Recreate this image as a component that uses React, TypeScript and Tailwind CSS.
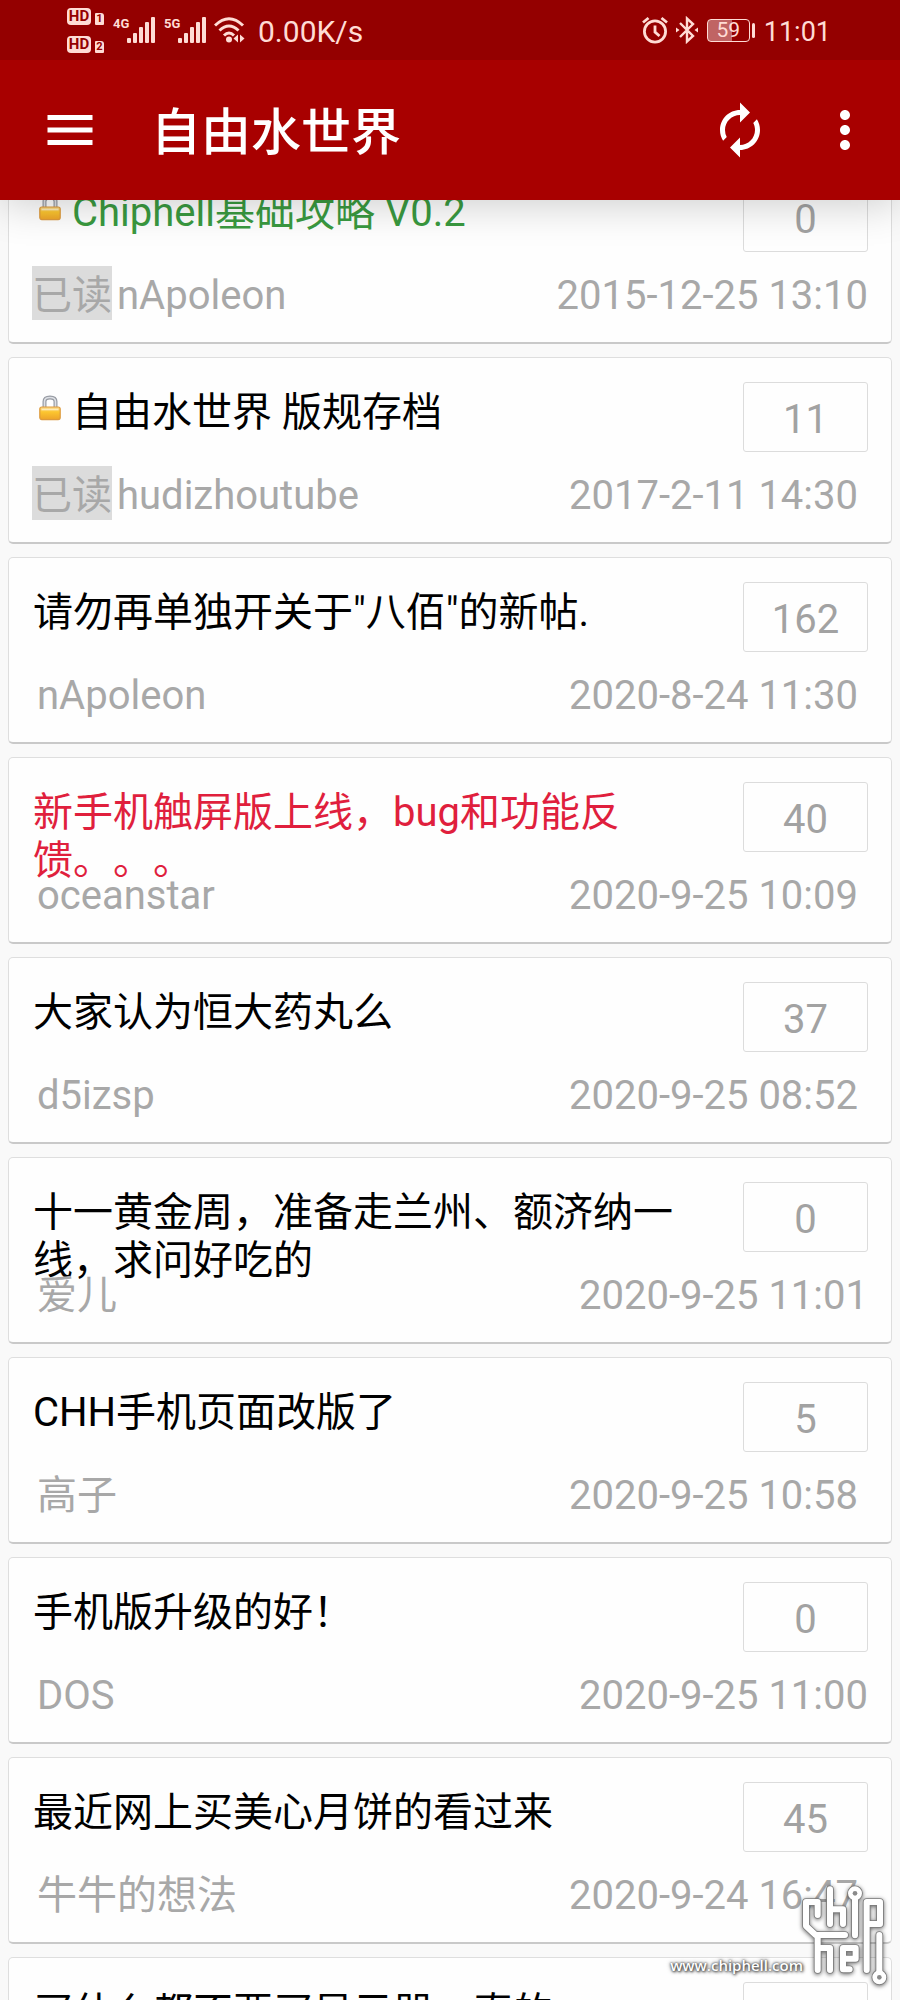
import { MdAutorenew, MdMenu, MdMoreVert } from "react-icons/md";

type Thread = {
  title: string;
  author: string;
  date: string;
  replies: number;
  read?: boolean;
  locked?: boolean;
  tone?: "green" | "red";
  flush?: boolean;
};

const threads: Thread[] = [
  { title: "Chiphell基础攻略 V0.2", author: "nApoleon", date: "2015-12-25 13:10", replies: 0, read: true, locked: true, tone: "green", flush: true },
  { title: "自由水世界 版规存档", author: "hudizhoutube", date: "2017-2-11 14:30", replies: 11, read: true, locked: true },
  { title: "请勿再单独开关于\"八佰\"的新帖.", author: "nApoleon", date: "2020-8-24 11:30", replies: 162 },
  { title: "新手机触屏版上线，bug和功能反馈。。。", author: "oceanstar", date: "2020-9-25 10:09", replies: 40, tone: "red" },
  { title: "大家认为恒大药丸么", author: "d5izsp", date: "2020-9-25 08:52", replies: 37 },
  { title: "十一黄金周，准备走兰州、额济纳一线，求问好吃的", author: "爱儿", date: "2020-9-25 11:01", replies: 0, flush: true },
  { title: "CHH手机页面改版了", author: "高子", date: "2020-9-25 10:58", replies: 5 },
  { title: "手机版升级的好！", author: "DOS", date: "2020-9-25 11:00", replies: 0, flush: true },
  { title: "最近网上买美心月饼的看过来", author: "牛牛的想法", date: "2020-9-24 16:47", replies: 45 },
  { title: "买什么都不要买显示器，真的", author: "", date: "", replies: 0 },
];

const tones = { green: "text-[#3a9a40]", red: "text-[#e01f3d]" };

function LockIcon() {
  return (
    <svg className="mr-[11px] ml-[6px] inline-block h-[26px] w-[22px] align-[5px]" viewBox="0 0 22 26" aria-hidden="true">
      <defs>
        <linearGradient id="brass" x1="0" y1="0" x2="0" y2="1">
          <stop offset="0" stopColor="#fbd98a" />
          <stop offset="0.4" stopColor="#fcc62f" />
          <stop offset="1" stopColor="#eda32a" />
        </linearGradient>
      </defs>
      <path d="M5.5 13V6.5Q5.5 2.5 11 2.5T16.5 6.5V13" fill="none" stroke="#979ba3" strokeWidth="4" />
      <path d="M5.5 13V6.5Q5.5 2.5 11 2.5T16.5 6.5V13" fill="none" stroke="#dddfe4" strokeWidth="1.6" />
      <rect x="0.8" y="12" width="20.4" height="12.6" rx="2" fill="url(#brass)" stroke="#dd9a3c" strokeWidth="1.2" />
      <path d="M2.5 14.5h17" stroke="#fdeab8" strokeWidth="1.6" />
    </svg>
  );
}

function Signal({ label }: { label: string }) {
  return (
    <div className="flex h-[26px] items-start">
      <span className="w-[14px] text-[13px] leading-[13px] font-bold">{label}</span>
      <svg className="h-[26px] w-[28px]" viewBox="0 0 28 26" fill="currentColor" aria-hidden="true">
        <rect x="0" y="21" width="4" height="5" rx="1" />
        <rect x="6" y="16" width="4" height="10" rx="1" />
        <rect x="12" y="10" width="4" height="16" rx="1" />
        <rect x="18" y="5" width="4" height="21" rx="1" />
        <rect x="24" y="0" width="4" height="26" rx="1" />
      </svg>
    </div>
  );
}

function Sim({ slot }: { slot: number }) {
  return (
    <div className="flex items-end gap-1">
      <span className="flex h-[17px] w-[24px] items-center justify-center rounded-[4px] bg-[#ffdcd5] text-[15px] leading-none font-bold text-[#940000]">
        HD
      </span>
      <span className="flex h-[12px] w-[9px] items-center justify-center rounded-[1px] rounded-tr-[3px] bg-[#ffdcd5] text-[11px] leading-none font-bold text-[#940000]">
        {slot}
      </span>
    </div>
  );
}

function StatusBar() {
  return (
    <div className="flex h-[60px] items-center justify-between bg-[#940000] pr-[69px] pl-[67px] text-[#ffdcd5]">
      <div className="flex items-center">
        <div className="flex flex-col gap-[11px] pt-px pb-px">
          <Sim slot={1} />
          <Sim slot={2} />
        </div>
        <div className="ml-[9px] flex items-center gap-[9px]">
          <Signal label="4G" />
          <Signal label="5G" />
        </div>
        <svg className="ml-2 h-[26px] w-[31px]" viewBox="0 0 31 26" fill="none" stroke="currentColor" strokeWidth="3" aria-hidden="true">
          <path d="M1 8.5Q15 -5 29 8.5" />
          <path d="M5.5 13.5Q15 4.500 24.500 13.500" />
          <path d="M10 18.500Q15 13.500 20 18.500" />
          <circle cx="15" cy="22.500" r="3" fill="currentColor" stroke="none" />
          <path d="M24 17.500v8l-4.500-4zM26 17.500v8l4.500-4z" fill="currentColor" stroke="none" />
        </svg>
        <span className="ml-[13px] pt-[3px] text-[30px] leading-[40px]">0.00K/s</span>
      </div>
      <div className="flex items-center">
        <svg className="h-[28px] w-[26px]" viewBox="0 0 26 28" fill="none" stroke="currentColor" strokeWidth="2.800" aria-hidden="true">
          <circle cx="13" cy="15.500" r="10.600" />
          <path d="M13 9.500v6.500l4.500 4M1 6.500l5.500-4.500M25 6.500L19.500 2" />
        </svg>
        <svg className="ml-2 h-[28px] w-[22px]" viewBox="0 0 22 28" fill="none" stroke="currentColor" strokeWidth="2.400" aria-hidden="true">
          <path d="M4 7l13 13-6 5.500V2.500l6 5.500L4 21" />
          <path d="M0 11.500l3.500 2.500L0 16.500zM22 11.500L18.500 14l3.500 2.500z" fill="currentColor" stroke="none" />
        </svg>
        <div className="ml-[9px] flex items-center gap-[2px]">
          <span className="flex h-[23px] w-[43px] items-center justify-center rounded-[4px] border border-[#ffdcd5] bg-[linear-gradient(90deg,#c06464_59%,transparent_59%)] text-[21px] leading-none">
            59
          </span>
          <span className="h-[15px] w-[3px] rounded-sm bg-[#ffdcd5]" />
        </div>
        <span className="ml-[9px] pt-[3px] text-[27px] leading-[40px]">11:01</span>
      </div>
    </div>
  );
}

function ThreadCard({ thread }: { thread: Thread }) {
  return (
    <li className="rounded-[5px] border border-b-2 border-[#dedede] border-b-[#c9c9c9] bg-[#fefefe] px-[23px] pt-6 pb-[22px]">
      <div className="flex h-[70px] items-start gap-[50px]">
        <h2 className={`min-w-0 flex-1 pt-[7px] pl-px text-[40px] leading-[48px] ${thread.tone ? tones[thread.tone] : "text-black"}`}>
          <a href="#thread">
            {thread.locked && <LockIcon />}
            {thread.title}
          </a>
        </h2>
        <span className="flex h-[70px] w-[125px] shrink-0 items-center justify-center rounded-[3px] border border-[#dcdcdc] pt-[5px] text-[40px] text-[#a2a2a2]">
          {thread.replies}
        </span>
      </div>
      <div className="mt-[14px] flex h-[54px] items-center justify-between text-[40px] leading-[48px] text-[#a8a8a8]">
        <div className="flex items-center">
          {thread.read && <span className="bg-[#dcdcdc] pt-[6px]">已读</span>}
          <span className="ml-[5px] pt-[6px]">{thread.author}</span>
        </div>
        <time className={thread.flush ? "pt-[6px]" : "pt-[6px] pr-[10px]"}>{thread.date}</time>
      </div>
    </li>
  );
}

function LogoLines() {
  return (
    <>
      <path d="M68 105V66H33V138L62 165H150" />
      <path d="M105 28V132M105 88H144V132" />
      <path d="M180 55V166M215 270V66H255V132H215" />
      <path d="M68 165V270M68 204H105V270" />
      <path d="M164 268H144V204H182V236H144" />
      <path d="M253 165V278" />
      <circle cx="180" cy="40" r="12" />
      <circle cx="253" cy="292" r="12" />
    </>
  );
}

function Watermark() {
  return (
    <div className="pointer-events-none absolute right-[9px] bottom-[10px] flex items-end">
      <span className="pb-[13px] font-['Open_Sans',sans-serif] text-[15px] leading-[24px] font-semibold text-white [text-shadow:0_0_2px_#444,1px_1px_3px_#444,0_0_4px_#666]">
        www.chiphell.com
      </span>
      <svg className="-ml-2 h-[110px] w-[96px] drop-shadow-[0_1px_2px_rgba(0,0,0,0.6)]" viewBox="0 0 288 330" fill="none" strokeLinejoin="round" strokeLinecap="round" aria-hidden="true">
        <g stroke="#7c7c7c" strokeWidth="23">
          <LogoLines />
        </g>
        <g stroke="#ffffff" strokeWidth="18">
          <LogoLines />
        </g>
        <circle cx="180" cy="40" r="7" fill="#8a8a8a" />
        <circle cx="253" cy="292" r="7" fill="#8a8a8a" />
      </svg>
    </div>
  );
}

export default function App() {
  return (
    <div className="relative flex h-screen flex-col overflow-hidden bg-[#f9f9f9] font-[Roboto,'Noto_Sans_CJK_SC',sans-serif] [text-spacing-trim:space-all]">
      <header className="relative z-10 shrink-0 shadow-[0_4px_40px_rgba(0,0,0,0.2)]">
        <StatusBar />
        <div className="flex h-[140px] items-center bg-[#a80000] pr-[25px] pl-10 text-white">
          <button type="button" aria-label="菜单">
            <MdMenu className="size-[60px]" />
          </button>
          <h1 className="ml-[51px] flex-1 pt-[6px] text-[50px] leading-[60px] font-medium">自由水世界</h1>
          <button type="button" aria-label="刷新">
            <MdAutorenew className="size-[60px]" />
          </button>
          <button type="button" aria-label="更多" className="ml-[45px]">
            <MdMoreVert className="size-[60px]" />
          </button>
        </div>
      </header>
      <main className="min-h-0 flex-1 overflow-hidden">
        <ul className="-mt-[43px] flex flex-col gap-[13px] px-2">
          {threads.map((thread) => (
            <ThreadCard key={thread.title} thread={thread} />
          ))}
        </ul>
      </main>
      <Watermark />
    </div>
  );
}
